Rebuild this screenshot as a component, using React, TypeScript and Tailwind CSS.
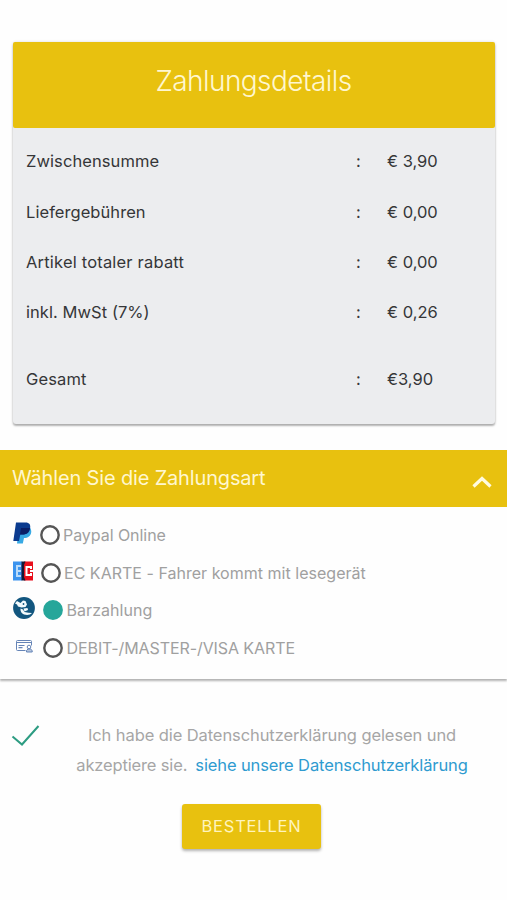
import React from "react";

const rows = [
  { label: "Zwischensumme", value: "€ 3,90", height: "h-[50px]", track: "tracking-[0.08px]" },
  { label: "Liefergebühren", value: "€ 0,00", height: "h-[51px]", track: "tracking-[0.06px]" },
  { label: "Artikel totaler rabatt", value: "€ 0,00", height: "h-[50px]", track: "tracking-[0.19px]" },
  { label: "inkl. MwSt (7%)", value: "€ 0,26", height: "h-[50px]", track: "tracking-[0.06px]" },
  { label: "Gesamt", value: "€3,90", height: "h-[84px]", track: "tracking-[0.15px]" },
];

function PaypalIcon() {
  return (
    <svg width="19" height="23" viewBox="0 0 19 23" className="block">
      <path d="M6 6h11.200c2.300 3 1 9.500-5 10h-1.200l-1.200 5.500H4z" fill="#37a9e4" />
      <path d="M3 0.500H12.500c4 0 5.300 2.200 4.600 6-.8 4.500-3.600 6-7.600 6H7.300L6 19H0.300z" fill="#0b3b8f" />
      <path d="M8 6h9c-.8 4.500-3.500 6.500-7.500 6.500H7z" fill="#0a1f66" />
    </svg>
  );
}

function EcIcon() {
  return (
    <svg width="20" height="20" viewBox="0 0 20 20" className="block">
      <path d="M0 0.500h9v19H0z" fill="#3b93ee" />
      <path d="M11 0.500h9v19h-9z" fill="#e80f1c" />
      <path d="M8.500 0.500h4L11 4v12l1.500 3.500h-4z" fill="#141a38" />
      <path d="M8 5H4v10h4M4 10h4" fill="none" stroke="#b9dbfa" strokeWidth="2" />
      <path d="M18 8V6h-4.500v8H18v-2" fill="none" stroke="#fff" strokeWidth="2" />
      <path d="M17 9h3v2h-3z" fill="#fff" />
    </svg>
  );
}

function CashIcon() {
  return (
    <svg width="22" height="22" viewBox="0 0 22 22" className="block">
      <circle cx="11" cy="11" r="10.900" fill="#12567f" />
      <path d="M2 6.500L4 4l3.500 2L10 3.500l2.500.5 1.500 3.500-1.500 2.500-4 .5-3.500-1L4 7.500z" fill="#f2fafd" />
      <path d="M7.500 11.500l2.500 1 1.500 2.500 4 .8 3.500.2c-1.500 2-5 2.500-8 1.500-2.500-.9-3.800-3.200-3.500-6z" fill="#f2fafd" />
      <path d="M10.500 11.500l4-.5.500 2-3.500 1.500z" fill="#f2fafd" />
      <circle cx="10.500" cy="7" r=".9" fill="#12567f" />
    </svg>
  );
}

function CardIcon() {
  return (
    <svg width="17" height="13" viewBox="0 0 17 13" className="block" fill="none" stroke="#6584b7" strokeWidth="1">
      <path d="M9.500 10.500H1.500a1 1 0 0 1-1-1v-8a1 1 0 0 1 1-1h13a1 1 0 0 1 1 1v4" />
      <path d="M1 2.500h14" strokeWidth="1" />
      <path d="M2.500 5.500h6M2.500 7.700h4" strokeWidth="1.200" />
      <circle cx="13" cy="7" r="1.800" />
      <path d="M10.500 12v-1.500l1.500-1.500h2.500l1.700 1.500V12z" fill="#b5c5de" />
    </svg>
  );
}

const options = [
  { Icon: PaypalIcon, text: "Paypal Online", checked: false, iconBox: "w-[27px]", textClass: "tracking-[-0.05px]", h: "h-[38px]" },
  { Icon: EcIcon, text: "EC KARTE - Fahrer kommt mit lesegerät", checked: false, iconBox: "w-[28px]", textClass: "tracking-[0.02px]", h: "h-[37px]" },
  { Icon: CashIcon, text: "Barzahlung", checked: true, iconBox: "w-[30px]", textClass: "pl-[0.5px] tracking-[0.06px]", h: "h-[37px]" },
  { Icon: CardIcon, text: "DEBIT-/MASTER-/VISA KARTE", checked: false, iconBox: "w-[30px] pl-[3px]", textClass: "pl-[0.5px] tracking-[-0.08px]", h: "h-[40px]" },
];

export default function App() {
  return (
    <main className="h-[900px] w-[507px] overflow-hidden bg-[#fefefe] pt-[42px] font-['Inter','Liberation_Sans',sans-serif] text-[16.5px] leading-[30px]">
      <section className="mx-[13px] h-[382px] w-[482px] rounded-[3px] bg-[#ecedef] shadow-[0_2px_2px_rgba(0,0,0,0.28),0_0_3px_rgba(0,0,0,0.15)]">
        <h1 className="flex h-[86px] items-center justify-center rounded-[2px] bg-[#e8c10f] pr-[1px] pb-[8px] text-[28px] font-light tracking-[-0.57px] text-[#fff7cf]">
          Zahlungsdetails
        </h1>
        <div className="pt-[8px] text-[#353638]">
          {rows.map((r) => (
            <div key={r.label} className={"flex items-center pl-[13px] " + r.height}>
              <span className={"w-[330px] " + r.track}>{r.label}</span>
              <span className="w-[31px]">:</span>
              <span>{r.value}</span>
            </div>
          ))}
        </div>
      </section>

      <section className="mt-[26px] h-[229px] shadow-[0_2px_2px_rgba(0,0,0,0.3)]">
        <h2 className="flex h-[57px] items-center justify-between bg-[#e8c10f] pr-[15px] pb-[1px] pl-[12px] text-[20px] font-normal tracking-[-0.16px] text-[#fff7cf]">
          <span>Wählen Sie die Zahlungsart</span>
          <svg width="20" height="14" viewBox="0 0 20 14" className="mt-[8px]">
            <path d="M1.500 11.500L10 3.500l8.500 8" fill="none" stroke="#fffbe0" strokeWidth="3.200" />
          </svg>
        </h2>
        <div className="pt-[9px] pl-[13px] text-[16px] text-[#a0a0a0]">
          {options.map(({ Icon, text, checked, iconBox, textClass, h }) => (
            <label key={text} className={"flex items-center gap-[3px] " + h}>
              <span className={"shrink-0 pb-[3px] " + iconBox}>
                <Icon />
              </span>
              <svg width="20" height="20" viewBox="0 0 20 20" className="-ml-[3px] shrink-0">
                <circle cx="10" cy="10" r="8.700" fill={checked ? "#26a69a" : "none"} stroke={checked ? "#26a69a" : "#555555"} strokeWidth="2.400" />
              </svg>
              <span className={"whitespace-nowrap " + textClass}>{text}</span>
            </label>
          ))}
        </div>
      </section>

      <section className="flex pt-[41px] pl-[11px] text-[16.5px] text-[#a6a6a6]">
        <svg width="30" height="24" viewBox="0 0 30 24" className="mt-[4px] shrink-0">
          <path d="M1.500 12.500L11 20.500L27.500 2" fill="none" stroke="#2d9c82" strokeWidth="2" />
        </svg>
        <p className="ml-[31px] w-[400px] text-center leading-[30px] tracking-[-0.09px] whitespace-nowrap">
          <span>Ich habe die Datenschutzerklärung gelesen und</span>
          <br />
          <span className="tracking-[-0.15px]">akzeptiere sie.</span>
          <a className="ml-[8px] tracking-[-0.12px] text-[#2f9bd0]">siehe unsere Datenschutzerklärung</a>
        </p>
      </section>

      <button className="ml-[182px] mt-[24px] block h-[45px] w-[139px] rounded-[3px] bg-[#e8c10f] pb-[1px] text-[16.500px] tracking-[0.8px] text-[#fff4bd] shadow-[0_2px_3px_rgba(0,0,0,0.3)]">
        BESTELLEN
      </button>
    </main>
  );
}
